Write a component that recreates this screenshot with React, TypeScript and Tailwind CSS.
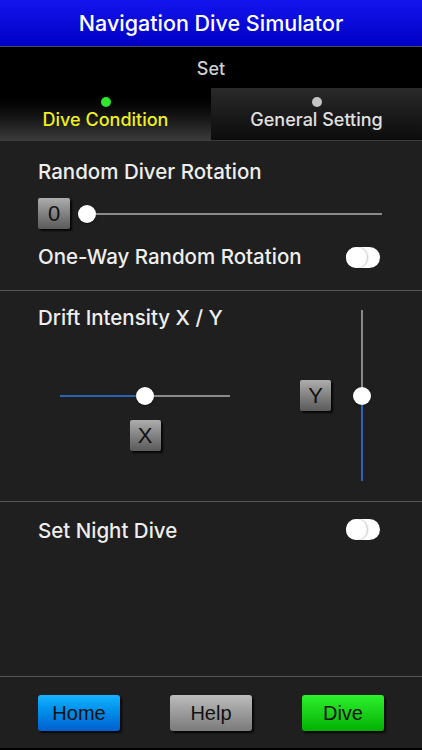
import React from 'react';

const font = { fontFamily: 'Inter, "Liberation Sans", Arial, sans-serif' };
const plain = { fontFamily: '"Liberation Sans", Arial, sans-serif' };

function BevelButton({ label, className }: { label: string; className?: string }) {
  return (
    <div
      style={plain}
      className={
        'flex items-center justify-center rounded-[2px] bg-gradient-to-b from-[#adadad] to-[#5a5a5a] text-[22px] text-[#111] shadow-[2px_2px_2px_rgba(0,0,0,0.8)] ' +
        (className ?? '')
      }
    >
      {label}
    </div>
  );
}

function Toggle() {
  return (
    <div className="relative h-[21px] w-[34px] rounded-full bg-white">
      <div className="absolute left-0 top-0 h-[21px] w-[21px] rounded-full bg-white shadow-[1px_0_2px_rgba(0,0,0,0.25)]" />
    </div>
  );
}

function Thumb() {
  return <div className="h-[18px] w-[18px] shrink-0 rounded-full bg-white shadow-[0_1px_2px_rgba(0,0,0,0.5)]" />;
}

function ActionButton({ label, tone }: { label: string; tone: 'blue' | 'gray' | 'green' }) {
  const tones = {
    blue: 'from-[#16b4ff] to-[#005fcf]',
    gray: 'from-[#bdbdbd] to-[#7a7a7a]',
    green: 'from-[#2cf22c] to-[#00b000]',
  };
  return (
    <div
      style={plain}
      className={
        'flex h-[36px] w-[82px] items-center justify-center rounded-[3px] bg-gradient-to-b text-[20px] text-[#111] shadow-[2px_2px_2px_rgba(0,0,0,0.8)] ' +
        tones[tone]
      }
    >
      {label}
    </div>
  );
}

export default function App() {
  return (
    <div className="flex h-[750px] w-[422px] flex-col overflow-hidden bg-[#1f1f1f] font-medium" style={font}>
      {/* Title bar */}
      <div className="flex h-[47px] shrink-0 items-center justify-center border-b border-[#4a4a5a] bg-gradient-to-b from-[#1414ee] to-[#0000c4] text-[21.5px] text-white">
        Navigation Dive Simulator
      </div>

      {/* Set band */}
      <div className="flex h-[40px] shrink-0 items-center justify-center bg-black pt-[2px] text-[18px] text-[#cfcfcf]">Set</div>

      {/* Tabs */}
      <div className="flex h-[54px] shrink-0 border-b border-[#3c3c3c] bg-black">
        <div className="flex w-[211px] flex-col items-center bg-gradient-to-b from-[#000] to-[#3a3a3a] pt-[10px]">
          <div className="h-[10px] w-[10px] rounded-full bg-[#2ee62e]" />
          <div className="-mt-px text-[18px] text-[#f0f020]">Dive Condition</div>
        </div>
        <div className="mt-px flex flex-1 flex-col items-center bg-gradient-to-b from-[#2a2a2a] to-[#0c0c0c] pt-[9px]">
          <div className="h-[10px] w-[10px] rounded-full bg-[#c4c4c4]" />
          <div className="-mt-px text-[18px] text-[#e0e0e0]">General Setting</div>
        </div>
      </div>

      {/* Random diver rotation */}
      <div className="flex h-[150px] shrink-0 flex-col border-b border-[#555] pl-[38px] pr-[40px] pt-[19px]">
        <div className="h-6 text-[20.5px] leading-6 text-[#eeeeee]">Random Diver Rotation</div>
        <div className="mt-[14px] flex h-[31px] items-center">
          <BevelButton label="0" className="h-[31px] w-[32px]" />
          <div className="ml-2 flex flex-1 items-center">
            <Thumb />
            <div className="h-[2px] flex-1 bg-[#8a8a8a]" />
          </div>
        </div>
        <div className="mt-[16px] flex h-6 items-center justify-between pr-[2px]">
          <div className="text-[20.5px] leading-6 text-[#eeeeee]">One-Way Random Rotation</div>
          <Toggle />
        </div>
      </div>

      {/* Drift intensity */}
      <div className="flex h-[211px] shrink-0 border-b border-[#555] pl-[38px] pr-[51px]">
        <div className="flex flex-1 flex-col">
          <div className="mt-[15px] h-6 text-[20.5px] leading-6 text-[#eeeeee]">Drift Intensity X / Y</div>
          <div className="ml-[22px] mt-[57px] flex w-[170px] flex-col items-center">
            <div className="flex h-[18px] w-full items-center">
              <div className="h-[2px] w-[76px] bg-[#2a62b8]" />
              <Thumb />
              <div className="h-[2px] flex-1 bg-[#8a8a8a]" />
            </div>
            <BevelButton label="X" className="mt-[15px] h-[31px] w-[31px]" />
          </div>
        </div>
        <BevelButton label="Y" className="mt-[89px] h-[31px] w-[31px]" />
        <div className="ml-[22px] mt-[19px] flex h-[171px] w-[18px] flex-col items-center">
          <div className="w-[2px] flex-1 bg-[#8a8a8a]" />
          <Thumb />
          <div className="h-[76px] w-[2px] bg-[#2a62b8]" />
        </div>
      </div>

      {/* Night dive */}
      <div className="flex h-[175px] shrink-0 flex-col border-b border-[#555] pl-[38px] pr-[42px] pt-[17px]">
        <div className="flex h-6 items-start justify-between">
          <div className="text-[20.5px] leading-6 text-[#eeeeee]">Set Night Dive</div>
          <Toggle />
        </div>
      </div>

      {/* Bottom buttons */}
      <div className="flex h-[71px] shrink-0 gap-[50px] pl-[38px] pt-[18px] font-normal">
        <ActionButton label="Home" tone="blue" />
        <ActionButton label="Help" tone="gray" />
        <ActionButton label="Dive" tone="green" />
      </div>
      <div className="flex-1 bg-black" />
    </div>
  );
}
